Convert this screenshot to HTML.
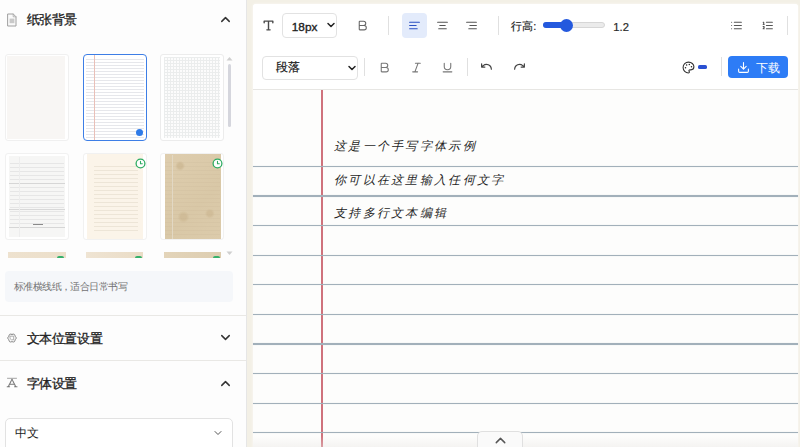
<!DOCTYPE html>
<html><head><meta charset="utf-8">
<style>
*{box-sizing:border-box;margin:0;padding:0}
html,body{width:800px;height:447px;overflow:hidden}
body{background:#f3f0e6;font-family:"Liberation Sans",sans-serif;position:relative;color:#333}
.a{position:absolute}
svg.i{position:absolute;fill:none;stroke-linecap:round;stroke-linejoin:round}
.hdr{position:absolute;left:26.6px;font-size:13px;letter-spacing:-0.4px;font-weight:500;color:#222;-webkit-text-stroke:0.3px #222;line-height:15px;white-space:nowrap}
.card{position:absolute;width:64px;background:#fff;border:1px solid #ececec;border-radius:3px;overflow:hidden}
.card .in{position:absolute;left:3px;top:2px;right:3px;bottom:2px}
.divh{position:absolute;left:0;width:246px;height:1px;background:#e9e8e5}
.sel{position:absolute;background:#fff;border:1px solid #e2e2e2;border-radius:4px}
.vd{position:absolute;width:1px;background:#e0e0e0}
.line{position:absolute;left:253px;width:545px;height:1.2px;background:#a2b0ba;box-shadow:0 0 1px rgba(170,185,196,.6)}
.hw{position:absolute;left:334px;font-size:12px;font-weight:200;letter-spacing:2.3px;color:#1f1f1f;line-height:14px;font-style:italic;white-space:nowrap}
.t{position:absolute;white-space:nowrap;line-height:14px}
</style></head>
<body>
<!-- ============ SIDEBAR ============ -->
<div class="a" style="left:0;top:0;width:247px;height:447px;background:#fdfdfd;border-right:1px solid #e6e6e6"></div>

<!-- header 1 -->
<svg class="i" style="left:7px;top:12.5px" width="10" height="14" viewBox="0 0 10 14"><path d="M1 1h5.3L9 3.8V13H1Z" fill="#fafafa" stroke="#a0a0a0" stroke-width="1"/><path d="M6.2 1v2.8H9" stroke="#a8a8a8" stroke-width=".8"/><rect x="2.6" y="5.6" width="4.8" height="4.6" fill="#c9c9c9" stroke="none"/></svg>
<div class="hdr" style="top:12.1px">纸张背景</div>
<svg class="i" style="left:217.5px;top:11.5px" width="15" height="15" viewBox="0 0 24 24"><path d="m18 15-6-6-6 6" stroke="#333" stroke-width="2.3"/></svg>

<!-- thumbnails row 1 -->
<div class="card" style="left:5px;top:54px;height:87px;border-color:#f0f0f0"><div class="in" style="left:1px;top:1px;right:3px;bottom:1px;background:#f8f6f4"></div></div>
<div class="card" style="left:82.5px;top:54px;height:87px;border:1.6px solid #3d7ee6;border-radius:4px">
  <div class="in" style="left:2px;top:4px;right:2px;bottom:2px;background-color:#fff;background-image:linear-gradient(#e6e7eb 1px,transparent 1px);background-size:100% 3px"></div>
  <div class="a" style="left:10.5px;top:0;width:1px;height:87px;background:#e9c0b8"></div>
  <div class="a" style="left:52px;top:74px;width:7px;height:7px;border-radius:50%;background:#2f7be8"></div>
</div>
<div class="card" style="left:160px;top:54px;height:87px"><div class="in" style="background-color:#fcfcfc;background-image:linear-gradient(#ebeded 1px,transparent 1px),linear-gradient(90deg,#ebeded 1px,transparent 1px);background-size:3px 3px"></div></div>
<!-- scrollbar -->
<div class="a" style="left:227.5px;top:63.5px;width:3.8px;height:63.5px;background:#d5d6dd;border-radius:2px"></div>
<svg class="i" style="left:226px;top:55.5px" width="7" height="5"><path d="M.5 4.5L3.5 1L6.5 4.5Z" fill="#cfcfcf" stroke="none"/></svg>
<svg class="i" style="left:226px;top:250.5px" width="7" height="5"><path d="M.5 .5L3.5 4L6.5 .5Z" fill="#cfcfcf" stroke="none"/></svg>

<!-- row 2 -->
<div class="card" style="left:5px;top:152.5px;height:87.5px;border-color:#f1f1f1">
  <div class="in" style="left:3px;right:3px;top:2.5px;bottom:2.5px;background:#f6f6f5"></div>
  <div class="in" style="left:4px;right:4px;top:9px;bottom:8px;background-image:linear-gradient(#e6e6e6 1px,transparent 1px);background-size:100% 4px"></div>
  <div class="a" style="left:3px;top:29px;width:56px;height:1px;background:#d6d6d6"></div>
  <div class="a" style="left:3px;top:55px;width:56px;height:1px;background:#d8d8d8"></div>
  <div class="a" style="left:3px;top:73px;width:56px;height:1px;background:#d6d6d6"></div>
  <div class="a" style="left:13px;top:3px;width:1px;height:80px;background:#ededed"></div>
  <div class="a" style="left:27px;top:70px;width:10px;height:1.6px;background:#8a8a8a"></div>
</div>
<div class="card" style="left:82.5px;top:152.5px;height:87.5px;border-color:#f1f1f1">
  <div class="in" style="left:3px;right:2.5px;top:0.5px;bottom:0.5px;background:#fbf4e9"></div>
  <div class="in" style="left:10px;right:8px;top:12px;bottom:6px;background-image:linear-gradient(#ede5d7 1px,transparent 1px);background-size:100% 4px"></div>
  <svg class="i" style="left:51px;top:4px" width="11" height="11" viewBox="0 0 11 11"><circle cx="5.5" cy="5.5" r="4.4" fill="#fff" stroke="#2eac63" stroke-width="1.3"/><path d="M5.5 3.2v2.5h1.8" stroke="#2eac63" stroke-width="1.1"/></svg>
</div>
<div class="card" style="left:160px;top:152.5px;height:87.5px;border-color:#f1f1f1">
  <div class="in" style="left:3.5px;right:2.5px;top:0.5px;bottom:0.5px;background:radial-gradient(circle at 27% 14%,#d0bc98 0 2.5px,transparent 5px),radial-gradient(circle at 33% 74%,#d0bc98 0 3px,transparent 6px),radial-gradient(circle at 80% 70%,#d1bd99 0 2.5px,transparent 5px),linear-gradient(135deg,#decdae,#d9c8a7 60%,#dccbab)"></div>
  <div class="in" style="left:4px;right:3px;top:8px;bottom:4px;background-image:linear-gradient(rgba(190,170,140,.15) 1px,transparent 1px);background-size:100% 4px"></div>
  <div class="a" style="left:11px;top:1px;width:1px;height:85px;background:#e2d8c4"></div>
  <svg class="i" style="left:51px;top:4px" width="11" height="11" viewBox="0 0 11 11"><circle cx="5.5" cy="5.5" r="4.4" fill="#fff" stroke="#2eac63" stroke-width="1.3"/><path d="M5.5 3.2v2.5h1.8" stroke="#2eac63" stroke-width="1.1"/></svg>
</div>
<!-- row 3 (clipped) -->
<div class="a" style="left:8px;top:252.3px;width:57.5px;height:6px;background:linear-gradient(90deg,#eee2cf,#ecdfca)"></div>
<div class="a" style="left:57px;top:256px;width:7px;height:2.3px;background:#36b06b;border-radius:2px 2px 0 0"></div>
<div class="a" style="left:86px;top:252.3px;width:57px;height:6px;background:linear-gradient(90deg,#efe4d3,#eadcc6)"></div>
<div class="a" style="left:135px;top:256px;width:7px;height:2.3px;background:#36b06b;border-radius:2px 2px 0 0"></div>
<div class="a" style="left:164px;top:252.3px;width:57px;height:6px;background:linear-gradient(90deg,#e3d4b9,#ddcdb0)"></div>
<div class="a" style="left:213px;top:256px;width:7px;height:2.3px;background:#36b06b;border-radius:2px 2px 0 0"></div>

<!-- description -->
<div class="a" style="left:4.5px;top:271px;width:228px;height:30.5px;background:#f5f7fa;border-radius:4px"></div>
<div class="t" style="left:13.8px;top:281px;font-size:10px;letter-spacing:-0.55px;color:#737373;line-height:12px">标准横线纸，适合日常书写</div>

<div class="divh" style="top:315px"></div>
<!-- header 2 -->
<svg class="i" style="left:6px;top:331.5px" width="12" height="12" viewBox="0 0 12 12"><path d="M6.00 2.40Q8.88 1.02 9.12 4.20Q11.75 6.00 9.12 7.80Q8.88 10.98 6.00 9.60Q3.13 10.98 2.88 7.80Q0.25 6.00 2.88 4.20Q3.12 1.02 6.00 2.40Z" stroke="#8a8a8a" stroke-width="1"/><path d="M4.3 4.2h3.4v3.6H5.4L4.3 6.8Z" stroke="#9a9a9a" stroke-width=".8"/></svg>
<div class="hdr" style="top:331px">文本位置设置</div>
<svg class="i" style="left:217.5px;top:330px" width="15" height="15" viewBox="0 0 24 24"><path d="m6 9 6 6 6-6" stroke="#333" stroke-width="2.3"/></svg>
<div class="divh" style="top:360px"></div>
<!-- header 3 -->
<svg class="i" style="left:6px;top:377px" width="12" height="11" viewBox="0 0 12 11"><path d="M1.5 1.3h9" stroke="#9a9a9a" stroke-width=".9"/><path d="M6 2.2L2.2 9.8M6 2.2L9.8 9.8M3.6 7.2h4.8M1.2 9.8h2.4M8.6 9.8h2.4" stroke="#777" stroke-width="1.1" stroke-dasharray="1.3 .7"/></svg>
<div class="hdr" style="top:376px">字体设置</div>
<svg class="i" style="left:217.5px;top:375.5px" width="15" height="15" viewBox="0 0 24 24"><path d="m18 15-6-6-6 6" stroke="#333" stroke-width="2.3"/></svg>

<!-- select 中文 -->
<div class="sel" style="left:4.5px;top:418px;width:228.5px;height:36px;border-radius:5px"></div>
<div class="t" style="left:14.8px;top:426px;font-size:12px;color:#222">中文</div>
<svg class="i" style="left:211.5px;top:427px" width="12" height="12" viewBox="0 0 24 24"><path d="m6 9 6 6 6-6" stroke="#555" stroke-width="2"/></svg>

<!-- ============ MAIN ============ -->
<div class="a" style="left:253px;top:3.5px;width:545px;height:444px;background:#fdfdfc;border-radius:3px 3px 0 0;box-shadow:0 0 3px rgba(255,255,255,.7)"></div>
<div class="a" style="left:253px;top:3.5px;width:545px;height:86.5px;background:#fff;border-bottom:1px solid #e7e6e3;border-radius:3px 3px 0 0"></div>

<!-- toolbar row 1 -->
<svg class="i" style="left:262.3px;top:19.1px" width="13" height="13" viewBox="0 0 24 24"><path d="M4 7V4h16v3M9 20h6M12 4v16" stroke="#4a4a4a" stroke-width="2.6"/></svg>
<div class="sel" style="left:282px;top:13px;width:55px;height:24.5px"></div>
<div class="t" style="left:291.8px;top:20px;font-size:11.8px;color:#222;-webkit-text-stroke:0.35px #222">18px</div>
<svg class="i" style="left:325px;top:19px" width="12" height="12" viewBox="0 0 24 24"><path d="m6 9 6 6 6-6" stroke="#222" stroke-width="3"/></svg>
<svg class="i" style="left:356.4px;top:19.3px" width="13" height="13" viewBox="0 0 24 24"><path d="M6 12h9a4 4 0 0 1 0 8H7a1 1 0 0 1-1-1V5a1 1 0 0 1 1-1h7a4 4 0 0 1 0 8" stroke="#666" stroke-width="2"/></svg>
<div class="vd" style="left:388px;top:16px;height:19px"></div>
<div class="a" style="left:402px;top:12.8px;width:24.8px;height:24.8px;background:#e3ebfb;border-radius:4px"></div>
<svg class="i" style="left:407.9px;top:18.9px" width="13" height="13" viewBox="0 0 24 24"><path d="M21 6H3M15 12H3M17 18H3" stroke="#2b50c2" stroke-width="2.1"/></svg>
<svg class="i" style="left:436.4px;top:18.9px" width="13" height="13" viewBox="0 0 24 24"><path d="M21 6H3M17 12H7M19 18H5" stroke="#555" stroke-width="2"/></svg>
<svg class="i" style="left:464.9px;top:18.9px" width="13" height="13" viewBox="0 0 24 24"><path d="M21 6H3M21 12H9M21 18H7" stroke="#555" stroke-width="2"/></svg>
<div class="vd" style="left:497.5px;top:16px;height:19px"></div>
<div class="t" style="left:511.3px;top:18.8px;font-size:11px;color:#222;-webkit-text-stroke:0.15px #222">行高:</div>
<div class="a" style="left:542.7px;top:22.2px;width:62.8px;height:6.3px;border-radius:3.2px;background:#ebebeb;border:1px solid #d6d6d6"></div>
<div class="a" style="left:542.7px;top:22.2px;width:24px;height:6.3px;border-radius:3.2px 0 0 3.2px;background:#2459de"></div>
<div class="a" style="left:560.3px;top:18.8px;width:13px;height:13px;border-radius:50%;background:#2459de"></div>
<div class="t" style="left:613.3px;top:19.5px;font-size:11.2px;color:#2a2a2a;-webkit-text-stroke:0.2px #2a2a2a">1.2</div>
<svg class="i" style="left:729.5px;top:18.9px" width="13" height="13" viewBox="0 0 24 24"><path d="M8 6h13M8 12h13M8 18h13M3 6h.01M3 12h.01M3 18h.01" stroke="#555" stroke-width="2"/></svg>
<svg class="i" style="left:761.4px;top:18.9px" width="13" height="13" viewBox="0 0 24 24"><path d="M10 6h11M10 12h11M10 18h11M4 6h1v4M4 10h2M6 18H4c0-1 2-2 2-3s-1-1.5-2-1" stroke="#555" stroke-width="2"/></svg>
<div class="vd" style="left:787px;top:16px;height:19px"></div>

<!-- toolbar row 2 -->
<div class="sel" style="left:262.3px;top:55.6px;width:95.5px;height:24px"></div>
<div class="t" style="left:275.8px;top:60px;font-size:12px;font-weight:500;color:#222;-webkit-text-stroke:0.2px #222">段落</div>
<svg class="i" style="left:345.5px;top:61.5px" width="12" height="12" viewBox="0 0 24 24"><path d="m6 9 6 6 6-6" stroke="#222" stroke-width="3"/></svg>
<div class="vd" style="left:364px;top:57.5px;height:18px"></div>
<svg class="i" style="left:378.3px;top:60.5px" width="13" height="13" viewBox="0 0 24 24"><path d="M6 12h9a4 4 0 0 1 0 8H7a1 1 0 0 1-1-1V5a1 1 0 0 1 1-1h7a4 4 0 0 1 0 8" stroke="#777" stroke-width="2"/></svg>
<svg class="i" style="left:409.8px;top:60.5px" width="13" height="13" viewBox="0 0 24 24"><path d="M19 4h-9M14 20H5M15 4 9 20" stroke="#777" stroke-width="2"/></svg>
<svg class="i" style="left:441.3px;top:60.5px" width="13" height="13" viewBox="0 0 24 24"><path d="M6 4v6a6 6 0 0 0 12 0V4M4 20h16" stroke="#777" stroke-width="2"/></svg>
<div class="vd" style="left:467px;top:57.5px;height:18.5px"></div>
<svg class="i" style="left:480px;top:59.5px" width="13" height="13" viewBox="0 0 24 24"><path d="M3 7v6h6M21 17a9 9 0 0 0-9-9 9 9 0 0 0-6 2.3L3 13" stroke="#444" stroke-width="2.2"/></svg>
<svg class="i" style="left:512.5px;top:59.5px" width="13" height="13" viewBox="0 0 24 24"><path d="M21 7v6h-6M3 17a9 9 0 0 1 9-9 9 9 0 0 1 6 2.3l3 2.7" stroke="#444" stroke-width="2.2"/></svg>

<svg class="i" style="left:682px;top:60.5px" width="13" height="13" viewBox="0 0 24 24"><circle cx="13.5" cy="6.5" r="1.4" fill="#222" stroke="none"/><circle cx="17.5" cy="10.5" r="1.4" fill="#222" stroke="none"/><circle cx="8.5" cy="7.5" r="1.4" fill="#222" stroke="none"/><circle cx="6.5" cy="12.5" r="1.4" fill="#222" stroke="none"/><path d="M12 2C6.5 2 2 6.5 2 12s4.5 10 10 10c.926 0 1.648-.746 1.648-1.688 0-.437-.18-.835-.437-1.125-.29-.289-.438-.652-.438-1.125a1.64 1.64 0 0 1 1.668-1.668h1.996c3.051 0 5.555-2.503 5.555-5.554C21.965 6.012 17.461 2 12 2z" stroke="#333" stroke-width="2"/></svg>
<div class="a" style="left:698px;top:65.4px;width:9.4px;height:3.3px;border-radius:1.6px;background:#2a50d2"></div>
<div class="vd" style="left:720.5px;top:57px;height:19px"></div>
<div class="a" style="left:728px;top:56px;width:60.3px;height:22px;background:#2d7cf6;border-radius:4px"></div>
<svg class="i" style="left:737.3px;top:60.5px" width="13" height="13" viewBox="0 0 24 24"><path d="M21 15v4a2 2 0 0 1-2 2H5a2 2 0 0 1-2-2v-4M7 10l5 5 5-5M12 15V3" stroke="#fff" stroke-width="2"/></svg>
<div class="t" style="left:755.8px;top:60.5px;font-size:12px;font-weight:500;color:#fff">下载</div>

<!-- ============ PAPER ============ -->
<div class="a" style="left:320.8px;top:90px;width:2.6px;height:357px;background:#cf727c"></div>
<div class="line" style="top:165.8px"></div>
<div class="line" style="top:195.4px"></div>
<div class="line" style="top:225.0px"></div>
<div class="line" style="top:254.6px"></div>
<div class="line" style="top:284.2px"></div>
<div class="line" style="top:313.8px"></div>
<div class="line" style="top:343.4px"></div>
<div class="line" style="top:373.0px"></div>
<div class="line" style="top:402.6px"></div>
<div class="line" style="top:432.2px"></div>

<div class="hw" style="top:138.5px">这是一个手写字体示例</div>
<div class="hw" style="top:172.8px">你可以在这里输入任何文字</div>
<div class="hw" style="top:206.2px">支持多行文本编辑</div>

<div class="a" style="left:253px;top:436px;width:545px;height:11px;background:linear-gradient(rgba(232,229,226,0),rgba(232,229,226,.4))"></div>
<div class="a" style="left:477px;top:430.5px;width:46px;height:22px;background:#fafafa;border:1px solid #e0e0e0;border-radius:5px"></div>
<svg class="i" style="left:491.5px;top:432px" width="17" height="17" viewBox="0 0 24 24"><path d="m18 15-6-6-6 6" stroke="#555" stroke-width="2"/></svg>
</body></html>
